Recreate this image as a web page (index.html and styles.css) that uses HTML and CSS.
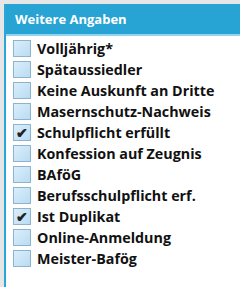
FILE: index.html
```html
<!DOCTYPE html>
<html lang="de">
<head>
    <meta charset="UTF-8">
    <title>Weitere Angaben</title>
    <link rel="stylesheet" href="styles.css">
</head>
<body>
    <div class="panel">
        <div class="panel-header">Weitere Angaben</div>
        <ul class="options">
            <li><span class="box"></span>Volljährig*</li>
            <li><span class="box"></span>Spätaussiedler</li>
            <li><span class="box"></span>Keine Auskunft an Dritte</li>
            <li><span class="box"></span>Masernschutz-Nachweis</li>
            <li><span class="box checked">✔</span>Schulpflicht erfüllt</li>
            <li><span class="box"></span>Konfession auf Zeugnis</li>
            <li><span class="box"></span>BAföG</li>
            <li><span class="box"></span>Berufsschulpflicht erf.</li>
            <li><span class="box checked">✔</span>Ist Duplikat</li>
            <li><span class="box"></span>Online-Anmeldung</li>
            <li><span class="box"></span>Meister-Bafög</li>
        </ul>
    </div>
</body>
</html>
```

FILE: styles.css
```css
* {
    box-sizing: border-box;
    margin: 0;
    padding: 0;
}

body {
    background: #e6e6e6;
    padding: 4px 0 0 4px;
    font-family: "Open Sans", "Noto Sans", sans-serif;
    height: 287px;
    overflow: hidden;
}

.panel {
    background: white;
    border-left: 2px solid #2aa7d6;
    height: 100%;
}

.panel-header {
    background: #27a4d3;
    color: white;
    font-weight: bold;
    font-size: 13px;
    height: 32px;
    line-height: 30px;
    padding-left: 9px;
    border-bottom: 2px solid #8fd3ee;
}

.options {
    list-style: none;
    padding: 2px 0 0 7px;
}

.options li {
    display: flex;
    align-items: center;
    gap: 6px;
    height: 21px;
    font-size: 14.3px;
    font-weight: bold;
    color: #111;
}

.box {
    flex: none;
    width: 18px;
    height: 17px;
    border: 1px solid #8db3d3;
    background: linear-gradient(135deg, #dbeefa 0%, #b9dcf2 100%);
    font-size: 14px;
    line-height: 15px;
    text-align: center;
    color: #222;
}
```
